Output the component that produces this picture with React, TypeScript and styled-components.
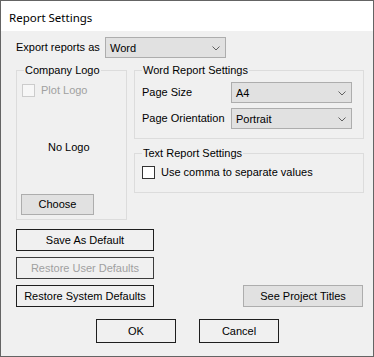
import React from "react";
import styled, { createGlobalStyle } from "styled-components";

const Global = createGlobalStyle`
  html, body { margin: 0; padding: 0; background: #f0f0f0; }
  * { box-sizing: border-box; }
`;

const Window = styled.div`
  width: 374px;
  height: 357px;
  border: 1px solid #646464;
  background: #f0f0f0;
  display: flex;
  flex-direction: column;
  font-family: "Liberation Sans", Arial, sans-serif;
  font-size: 11px;
  color: #000;
  overflow: hidden;
`;

const TitleBar = styled.div`
  height: 30px;
  background: #ffffff;
  display: flex;
  align-items: center;
  padding-left: 8px;
  padding-top: 2px;
  font-family: "Noto Sans", "Open Sans", sans-serif;
  font-size: 11.5px;
  color: #000;
`;

const Body = styled.div`
  display: flex;
  flex-direction: column;
  padding: 6px 0 0 15px;
`;

const Row = styled.div`
  display: flex;
  align-items: center;
`;

const FieldLabel = styled.div<{ $w: number }>`
  width: ${(p) => p.$w}px;
  line-height: 13px;
`;

const Combo = styled.div<{ $w: number; $h: number }>`
  width: ${(p) => p.$w}px;
  height: ${(p) => p.$h}px;
  background: #e1e1e1;
  border: 1px solid #adadad;
  display: flex;
  align-items: center;
  justify-content: space-between;
  padding: 1px 5px 0 4px;
  line-height: 13px;
`;

const Chevron = () => (
  <svg width="8" height="5" viewBox="0 0 8 5">
    <polyline points="0.5,0.5 4,4 7.5,0.5" fill="none" stroke="#606060" strokeWidth="1" />
  </svg>
);

const GroupsRow = styled.div`
  display: flex;
  gap: 7px;
  margin-top: 12px;
  align-items: flex-start;
`;

const GroupBox = styled.div<{ $w: number; $h: number; $pad: string }>`
  width: ${(p) => p.$w}px;
  height: ${(p) => p.$h}px;
  border: 1px solid #dcdcdc;
  display: flex;
  flex-direction: column;
  padding: ${(p) => p.$pad};
`;

const Legend = styled.div`
  align-self: flex-start;
  margin-top: -7px;
  margin-left: 7px;
  padding: 0 1px;
  line-height: 13px;
  background: #f0f0f0;
`;

const RightColumn = styled.div`
  display: flex;
  flex-direction: column;
  gap: 14px;
`;

const CheckRow = styled.label<{ $top: number; $left: number; $disabled?: boolean }>`
  display: flex;
  align-items: center;
  gap: 6px;
  margin-top: ${(p) => p.$top}px;
  margin-left: ${(p) => p.$left}px;
  color: ${(p) => (p.$disabled ? "#a0a0a0" : "#000")};
  line-height: 13px;
`;

const Box = styled.span<{ $disabled?: boolean }>`
  width: 13px;
  height: 13px;
  border: 1px solid ${(p) => (p.$disabled ? "#cccccc" : "#333333")};
  background: ${(p) => (p.$disabled ? "#f7f7f7" : "#ffffff")};
  flex: none;
`;

const NoLogo = styled.div`
  margin-top: 44px;
  padding-left: 31px;
  line-height: 13px;
`;

const Button = styled.button<{ $w: number; $h: number; $flat?: boolean }>`
  width: ${(p) => p.$w}px;
  height: ${(p) => p.$h}px;
  font-family: "Liberation Sans", Arial, sans-serif;
  font-size: 11px;
  color: #000;
  background: ${(p) => (p.$flat ? "#f0f0f0" : "#e1e1e1")};
  border: 1px solid ${(p) => (p.$flat ? "#1e1e1e" : "#adadad")};
  padding: 0;
  margin: 0;
  line-height: 13px;
  &:disabled {
    color: #a0a0a0;
    border-color: #3c3c3c;
  }
`;

const ChooseButton = styled(Button)`
  margin-top: auto;
  margin-left: 4px;
`;

const ActionArea = styled.div`
  display: flex;
  align-items: flex-end;
  margin-top: 9px;
`;

const ButtonColumn = styled.div`
  display: flex;
  flex-direction: column;
  gap: 6px;
`;

const SideButton = styled(Button)`
  margin-left: 89px;
`;

const DialogRow = styled.div`
  display: flex;
  gap: 23px;
  margin-top: 12px;
  padding-left: 80px;
`;

const SettingRow = styled(Row)<{ $top: number }>`
  margin-top: ${(p) => p.$top}px;
  padding-left: 7px;
`;

export default function App() {
  return (
    <>
      <Global />
      <Window>
        <TitleBar>Report Settings</TitleBar>
        <Body>
          <Row>
            <FieldLabel $w={89}>Export reports as</FieldLabel>
            <Combo $w={121} $h={21}>
              <span>Word</span>
              <Chevron />
            </Combo>
          </Row>

          <GroupsRow>
            <GroupBox $w={111} $h={150} $pad="0 0 4px 0">
              <Legend>Company Logo</Legend>
              <CheckRow $top={7} $left={5} $disabled>
                <Box $disabled />
                <span>Plot Logo</span>
              </CheckRow>
              <NoLogo>No Logo</NoLogo>
              <ChooseButton $w={73} $h={21}>Choose</ChooseButton>
            </GroupBox>

            <RightColumn>
              <GroupBox $w={230} $h={69} $pad="0 0 0 0">
                <Legend>Word Report Settings</Legend>
                <SettingRow $top={5}>
                  <FieldLabel $w={89}>Page Size</FieldLabel>
                  <Combo $w={121} $h={21}>
                    <span>A4</span>
                    <Chevron />
                  </Combo>
                </SettingRow>
                <SettingRow $top={5}>
                  <FieldLabel $w={89}>Page Orientation</FieldLabel>
                  <Combo $w={121} $h={21}>
                    <span>Portrait</span>
                    <Chevron />
                  </Combo>
                </SettingRow>
              </GroupBox>
              <GroupBox $w={230} $h={40} $pad="0">
                <Legend>Text Report Settings</Legend>
                <CheckRow $top={6} $left={7}>
                  <Box />
                  <span>Use comma to separate values</span>
                </CheckRow>
              </GroupBox>
            </RightColumn>
          </GroupsRow>

          <ActionArea>
            <ButtonColumn>
              <Button $w={138} $h={22} $flat>Save As Default</Button>
              <Button $w={138} $h={22} $flat disabled>Restore User Defaults</Button>
              <Button $w={138} $h={22} $flat>Restore System Defaults</Button>
            </ButtonColumn>
            <SideButton $w={120} $h={22}>See Project Titles</SideButton>
          </ActionArea>

          <DialogRow>
            <Button $w={80} $h={24} $flat>OK</Button>
            <Button $w={80} $h={24} $flat>Cancel</Button>
          </DialogRow>
        </Body>
      </Window>
    </>
  );
}
